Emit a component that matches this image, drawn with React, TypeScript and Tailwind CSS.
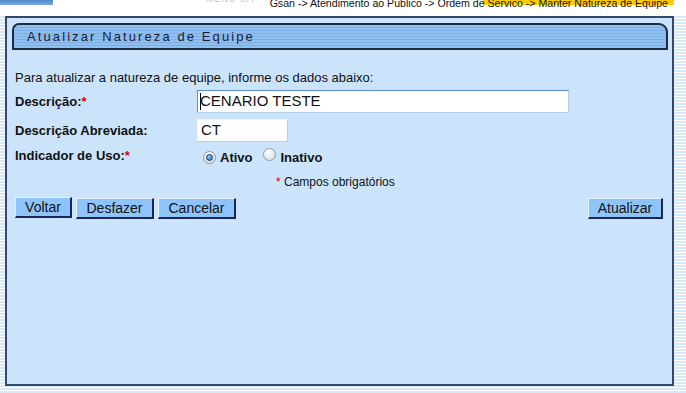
import React from "react";

function Radio({ checked }: { checked?: boolean }) {
  return (
    <span className="inline-flex h-[13px] w-[13px] items-center justify-center rounded-full border border-[#8d99a6] bg-[radial-gradient(circle_at_35%_30%,#ffffff,#d4d8dc)]">
      {checked ? (
        <span className="h-[7px] w-[7px] rounded-full border border-[#0d3a66] bg-[radial-gradient(circle_at_35%_30%,#8fd0ff,#1769b5)]" />
      ) : null}
    </span>
  );
}

function Btn({ children, w }: { children: React.ReactNode; w: string }) {
  return (
    <button
      className={`${w} h-[21px] border border-t-[#e4f1ff] border-l-[#e4f1ff] border-r-[#1b2650] border-b-[#1b2650] border-r-2 border-b-2 bg-[#8fc4fb] text-[14px] leading-[17px] text-[#111] font-['Liberation_Sans',Arial,sans-serif]`}
    >
      {children}
    </button>
  );
}

export default function App() {
  return (
    <div className="w-[686px] h-[393px] overflow-hidden bg-[repeating-linear-gradient(to_bottom,#ffffff_0px,#ffffff_1px,#d9e8f6_1px,#d9e8f6_3px)] font-['Liberation_Sans',Arial,sans-serif] text-[#111]">
      <div className="relative flex h-[16px] items-start bg-white">
        <div className="h-[5px] w-[53px] bg-[linear-gradient(to_bottom,#4f86cc,#7aa9e0)]" />
        <div className="absolute left-[206px] top-[-5px] text-[9px] leading-[9px] text-[#c4c4c4] tracking-[1px]">MENU  SA</div>
        <div className="absolute left-[483px] top-0 h-[5px] w-[191px] bg-[#ffcc00]" />
        <div className="relative ml-auto mr-[18px] mt-[-3px] whitespace-nowrap text-[10.6px] leading-[13px] text-[#111]">
          Gsan -&gt; Atendimento ao Publico -&gt; Ordem de Servico -&gt; Manter Natureza de Equipe
        </div>
      </div>
      <div className="ml-[5px] h-[370px] w-[669px] border-2 border-[#34486a] bg-[#cbe4fc]">
        <div className="ml-[5px] mr-[4px] mt-[5px] flex h-[27px] items-center rounded-tl-[7px] rounded-tr-[9px] border-2 border-[#1c2b3f] bg-[repeating-linear-gradient(to_bottom,#90c0f0_0px,#90c0f0_2px,#7cafe6_2px,#7cafe6_3px)] pl-[13px]">
          <span className="text-[13px] tracking-[2.1px] text-[#1b1b33]">Atualizar Natureza de Equipe</span>
        </div>
        <div className="pl-[8px] pr-[9px]">
          <div className="mt-[20px] h-[15px] text-[13px] leading-[15px]">
            Para atualizar a natureza de equipe, informe os dados abaixo:
          </div>
          <div className="mt-[5px] flex h-[23px] items-center">
            <div className="w-[182px] text-[13px] font-bold">
              Descrição:<span className="text-[#e00000]">*</span>
            </div>
            <div className="flex h-[23px] w-[372px] items-center border border-t-[#5b8ec4] border-l-[#5b8ec4] border-r-[#b4cfe9] border-b-[#b4cfe9] bg-white pl-[2px] text-[15px]">
              <span className="mr-[-1px] h-[17px] w-[1px] bg-black" />
              CENARIO TESTE
            </div>
          </div>
          <div className="mt-[6px] flex h-[23px] items-center">
            <div className="w-[182px] text-[13px] font-bold">Descrição Abreviada:</div>
            <div className="flex h-[23px] w-[91px] items-center border border-t-[#e9f2fb] border-l-[#e9f2fb] border-r-[#b4cfe9] border-b-[#b4cfe9] bg-white pl-[3px] text-[15px]">
              CT
            </div>
          </div>
          <div className="mt-[6px] flex h-[18px] items-center">
            <div className="w-[182px] self-start text-[13px] font-bold leading-[15px]">
              Indicador de Uso:<span className="text-[#e00000]">*</span>
            </div>
            <div className="ml-[6px] flex items-center text-[13px] font-bold">
              <Radio checked />
              <span className="ml-[4px] mt-[2px]">Ativo</span>
              <span className="ml-[10px]">
                <Radio />
              </span>
              <span className="ml-[5px] mt-[2px]">Inativo</span>
            </div>
          </div>
          <div className="mt-[8px] h-[16px] pl-[261px] text-[12px] leading-[16px]">
            <span className="text-[#e00000]">*</span> Campos obrigatórios
          </div>
          <div className="mt-[7px] flex h-[21px] items-center">
            <Btn w="w-[57px]">Voltar</Btn>
            <div className="ml-[4px]">
              <Btn w="w-[78px]">Desfazer</Btn>
            </div>
            <div className="ml-[4px]">
              <Btn w="w-[78px]">Cancelar</Btn>
            </div>
            <div className="ml-auto">
              <Btn w="w-[75px]">Atualizar</Btn>
            </div>
          </div>
        </div>
      </div>
    </div>
  );
}
